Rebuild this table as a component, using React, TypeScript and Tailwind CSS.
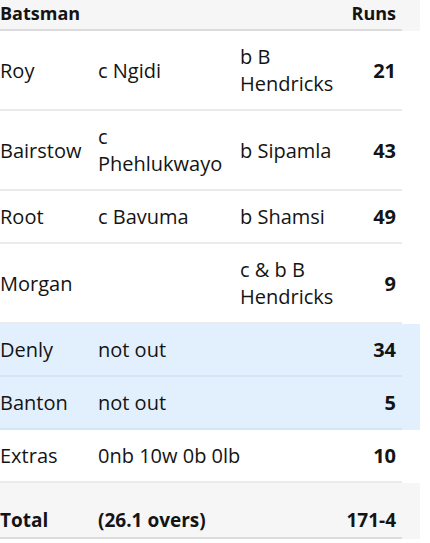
import React from "react";

type Row = { name: string; how: string; bowler: string; runs: string; hl?: boolean };

const rows: Row[] = [
  { name: "Roy", how: "c Ngidi", bowler: "b B Hendricks", runs: "21" },
  { name: "Bairstow", how: "c Phehlukwayo", bowler: "b Sipamla", runs: "43" },
  { name: "Root", how: "c Bavuma", bowler: "b Shamsi", runs: "49" },
  { name: "Morgan", how: "", bowler: "c & b B Hendricks", runs: "9" },
  { name: "Denly", how: "not out", bowler: "", runs: "34", hl: true },
  { name: "Banton", how: "not out", bowler: "", runs: "5", hl: true },
  { name: "Extras", how: "0nb 10w 0b 0lb", bowler: "", runs: "10" },
];

export default function App() {
  return (
    <div
      className="w-[430px] h-[543px] bg-white text-[#141414]"
      style={{ fontFamily: '"Open Sans", "Noto Sans", sans-serif' }}
    >
      <div className="w-[420px] bg-[#f6f6f6]">
        <div className="w-[402px] flex justify-between border-b-2 border-[#dcdcdc] h-[31px] pt-[1px] pr-[6px] text-[18px] leading-[24px] font-bold">
          <span>Batsman</span>
          <span>Runs</span>
        </div>
      </div>
      {rows.map((r) => (
        <div key={r.name} className={"w-[420px] " + (r.hl ? "bg-[#e2f0fd]" : "bg-white")}>
          <div
            className={
              "w-[402px] grid grid-cols-[98px_142px_1fr_auto] items-center border-b-2 py-[12px] pr-[6px] text-[20px] leading-[27px] " +
              (r.hl ? "border-[#d3e6f8]" : "border-[#ebebeb]")
            }
          >
            <div className="pr-2">{r.name}</div>
            <div className={r.name === "Extras" ? "col-span-2" : "pr-[10px]"}>{r.how}</div>
            {r.name !== "Extras" && <div className="pr-[10px]">{r.bowler}</div>}
            <div className="text-right font-bold">{r.runs}</div>
          </div>
        </div>
      ))}
      <div className="w-[420px] bg-[#f6f6f6]">
        <div className="w-[402px] grid grid-cols-[98px_1fr_auto] border-b-2 border-[#dcdcdc] pt-[24px] pb-[4px] pr-[6px] text-[19px] leading-[26px] font-bold">
          <div>Total</div>
          <div>(26.1 overs)</div>
          <div className="text-right">171-4</div>
        </div>
      </div>
    </div>
  );
}
